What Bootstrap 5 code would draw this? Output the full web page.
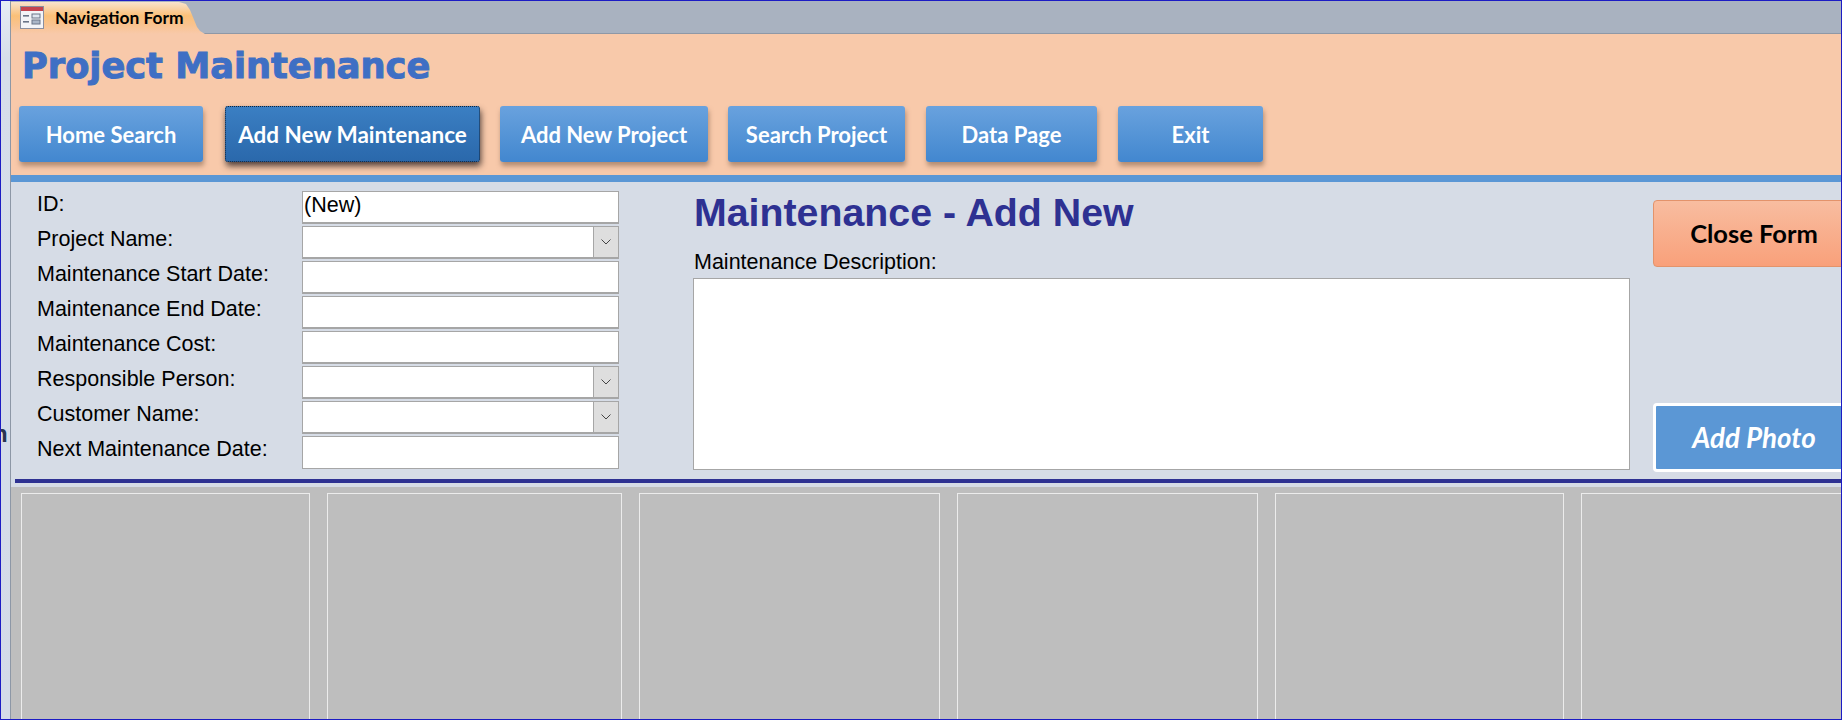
<!DOCTYPE html>
<html lang="en">
<head>
<meta charset="utf-8">
<title>Navigation Form</title>
<link rel="stylesheet" href="https://cdn.jsdelivr.net/npm/bootstrap@5.3.0/dist/css/bootstrap.min.css">
<style>
html, body { height: 100%; overflow: hidden; }
body { background: #a9b2c0; font-family: "Liberation Sans", Arial, sans-serif; color: #000; }
.app-window { width: 1842px; height: 720px; border: 1px solid #1c1cc4; overflow: hidden; background: #d3dbe8; }
.nav-strip { width: 10px; flex: 0 0 10px; border-right: 1px solid #8d97a6; overflow: hidden; color: #2b3550; background: linear-gradient(#e6ecf5 0, #d6deea 8%, #d3dbe8 100%); }
.strip-letter { font: 700 24px "Liberation Sans", sans-serif; line-height: 1; margin: 421px 0 0 -8px; }
.work-area { min-width: 0; flex: 1 1 auto; overflow: hidden; }
.tab-bar { height: 33px; background: #a9b2c0; border-bottom: 1px solid #8f98a6; }
.form-tab { width: 194px; height: 33px; padding-left: 9px; background: linear-gradient(#f8e6d4 0, #fbc078 45%, #f9c38f 72%, #f8c9aa 100%); clip-path: polygon(0 1px, 168px 1px, 175px 3px, 179px 9px, 186px 26px, 189px 30px, 194px 33px, 0 33px); font: 700 17.4px Lato, sans-serif; gap: 11px; }
.header-band { height: 141px; background: #f8c9aa; padding: 10px 0 0 11px; }
.app-title { font: 700 35.2px "DejaVu Sans", sans-serif; -webkit-text-stroke: 1px #3f6fc4; color: #3f6fc4; line-height: 44px; margin: 0; }
.cmd-row { margin: 18px 0 0 -3px; }
.cmd-btn { height: 56px; border: 0; border-radius: 3px; color: #fff; font: 700 22px Lato, sans-serif; background: linear-gradient(#69a2de, #4287cf); box-shadow: 1px 4px 5px rgba(120, 90, 70, .55); padding: 0; text-align: center; }
.cmd-active { background: linear-gradient(#3b7fc3, #2a68ab); outline: 1px dotted #10233b; outline-offset: -1px; box-shadow: 1px 4px 6px rgba(40, 30, 30, .8); font-size: 22.5px; padding-top: 1px; }
.w-home { width: 184px; margin-right: 22px; }
.w-maint { width: 255px; margin-right: 20px; }
.w-proj { width: 208px; margin-right: 20px; }
.w-search { width: 177px; margin-right: 21px; }
.w-data { width: 171px; margin-right: 21px; }
.w-exit { width: 145px; }
.blue-rule { height: 7px; background: #5b97d5; }
.form-panel { height: 298px; background: #d6dce6; padding: 9px 0 0 26px; }
.fields { width: 656px; flex: 0 0 656px; }
.field-row { height: 35px; }
.field-row label { width: 265px; flex: 0 0 265px; font-size: 21.5px; line-height: 24px; height: 35px; padding-top: 1px; }
.entry-box { width: 317px; height: 33px; background: #fff; border: 1px solid #a6a6a6; border-bottom-width: 2px; font-size: 21.5px; line-height: 27px; padding-left: 1px; }
.entry-last { border-bottom-width: 1px; }
.combo-arrow { width: 25px; height: 100%; background: #dedede; border-left: 1px solid #a6a6a6; }
.main-col { width: 937px; flex: 0 0 937px; margin-top: 1px; }
.main-title { color: #2e3192; font: 700 39.3px "Liberation Sans", sans-serif; line-height: 44px; margin: -2px 0 16px 1px; }
.desc-label { font-size: 21.5px; line-height: 24px; margin: 0 0 4px 1px; }
.desc-box { height: 192px; background: #fff; border: 1px solid #a6a6a6; }
.side-col { margin-left: 23px; width: 188px; flex: 0 0 188px; margin-top: 9px; height: 272px; }
.close-btn { height: 67px; width: 202px; color: #000; border: 1px solid #e3936b; border-radius: 4px; background: linear-gradient(#f8bda0, #f9a07a); font: 700 25.5px Lato, sans-serif; padding: 0; }
.photo-btn { height: 69px; width: 202px; color: #fff; border: 3px solid #fff; border-radius: 4px; background: #5b97d5; font: italic 700 27.8px Lato, sans-serif; padding: 0; }
.navy-rule { height: 4px; background: #2e3192; margin-left: 4px; }
.light-gap { height: 4px; background: #d6dce6; }
.photo-strip { height: 232px; background: #bebebe; padding: 6px 0 0 10px; gap: 17px; overflow: hidden; }
.photo-slot { flex: 0 0 auto; height: 300px; border: 1px solid #ececec; background: #bebebe; }
.s1 { width: 289px; } .s2 { width: 295px; } .s3 { width: 301px; } .s4 { width: 301px; } .s5 { width: 289px; } .s6 { width: 301px; }
</style>
</head>
<body>
<div class="app-window d-flex">
  <div class="nav-strip"><div class="strip-letter">n</div></div>
  <div class="work-area d-flex flex-column">
    <div class="tab-bar">
      <div class="form-tab d-flex align-items-center">
        <svg width="24" height="23" viewBox="0 0 24 23" aria-hidden="true">
          <rect x="0.5" y="0.5" width="23" height="22" fill="#f3f4f8" stroke="#8a8fa0"/>
          <rect x="1" y="1" width="22" height="4" fill="#c4444f"/>
          <rect x="3" y="9" width="6" height="1.6" fill="#6a7488"/>
          <rect x="3" y="15" width="6" height="1.6" fill="#6a7488"/>
          <rect x="12" y="8" width="8" height="4" fill="#dfe6f0" stroke="#6a7488"/>
          <rect x="12" y="14" width="8" height="4" fill="#aab6c8" stroke="#6a7488"/>
        </svg>
        <span>Navigation Form</span>
      </div>
    </div>
    <div class="header-band">
      <h1 class="app-title">Project Maintenance</h1>
      <div class="cmd-row d-flex">
        <button type="button" class="btn cmd-btn w-home">Home Search</button>
        <button type="button" class="btn cmd-btn cmd-active w-maint">Add New Maintenance</button>
        <button type="button" class="btn cmd-btn w-proj">Add New Project</button>
        <button type="button" class="btn cmd-btn w-search">Search Project</button>
        <button type="button" class="btn cmd-btn w-data">Data Page</button>
        <button type="button" class="btn cmd-btn w-exit">Exit</button>
      </div>
    </div>
    <div class="blue-rule"></div>
    <div class="form-panel d-flex">
      <div class="fields">
        <div class="field-row d-flex"><label>ID:</label><div class="entry-box">(New)</div></div>
        <div class="field-row d-flex"><label>Project Name:</label><div class="entry-box d-flex justify-content-end"><div class="combo-arrow d-flex align-items-center justify-content-center"><svg width="10" height="6" viewBox="0 0 10 6"><path d="M.5 .5l4.5 4.5 4.5-4.5" fill="none" stroke="#444" stroke-width="1"/></svg></div></div></div>
        <div class="field-row d-flex"><label>Maintenance Start Date:</label><div class="entry-box"></div></div>
        <div class="field-row d-flex"><label>Maintenance End Date:</label><div class="entry-box"></div></div>
        <div class="field-row d-flex"><label>Maintenance Cost:</label><div class="entry-box"></div></div>
        <div class="field-row d-flex"><label>Responsible Person:</label><div class="entry-box d-flex justify-content-end"><div class="combo-arrow d-flex align-items-center justify-content-center"><svg width="10" height="6" viewBox="0 0 10 6"><path d="M.5 .5l4.5 4.5 4.5-4.5" fill="none" stroke="#444" stroke-width="1"/></svg></div></div></div>
        <div class="field-row d-flex"><label>Customer Name:</label><div class="entry-box d-flex justify-content-end"><div class="combo-arrow d-flex align-items-center justify-content-center"><svg width="10" height="6" viewBox="0 0 10 6"><path d="M.5 .5l4.5 4.5 4.5-4.5" fill="none" stroke="#444" stroke-width="1"/></svg></div></div></div>
        <div class="field-row d-flex"><label>Next Maintenance Date:</label><div class="entry-box entry-last"></div></div>
      </div>
      <div class="main-col">
        <h2 class="main-title">Maintenance - Add New</h2>
        <div class="desc-label">Maintenance Description:</div>
        <div class="desc-box"></div>
      </div>
      <div class="side-col d-flex flex-column justify-content-between">
        <button type="button" class="btn close-btn">Close Form</button>
        <button type="button" class="btn photo-btn">Add Photo</button>
      </div>
    </div>
    <div class="navy-rule"></div>
    <div class="light-gap"></div>
    <div class="photo-strip d-flex">
      <div class="photo-slot s1"></div>
      <div class="photo-slot s2"></div>
      <div class="photo-slot s3"></div>
      <div class="photo-slot s4"></div>
      <div class="photo-slot s5"></div>
      <div class="photo-slot s6"></div>
    </div>
  </div>
</div>
<script src="https://cdn.jsdelivr.net/npm/bootstrap@5.3.0/dist/js/bootstrap.bundle.min.js"></script>
</body>
</html>
